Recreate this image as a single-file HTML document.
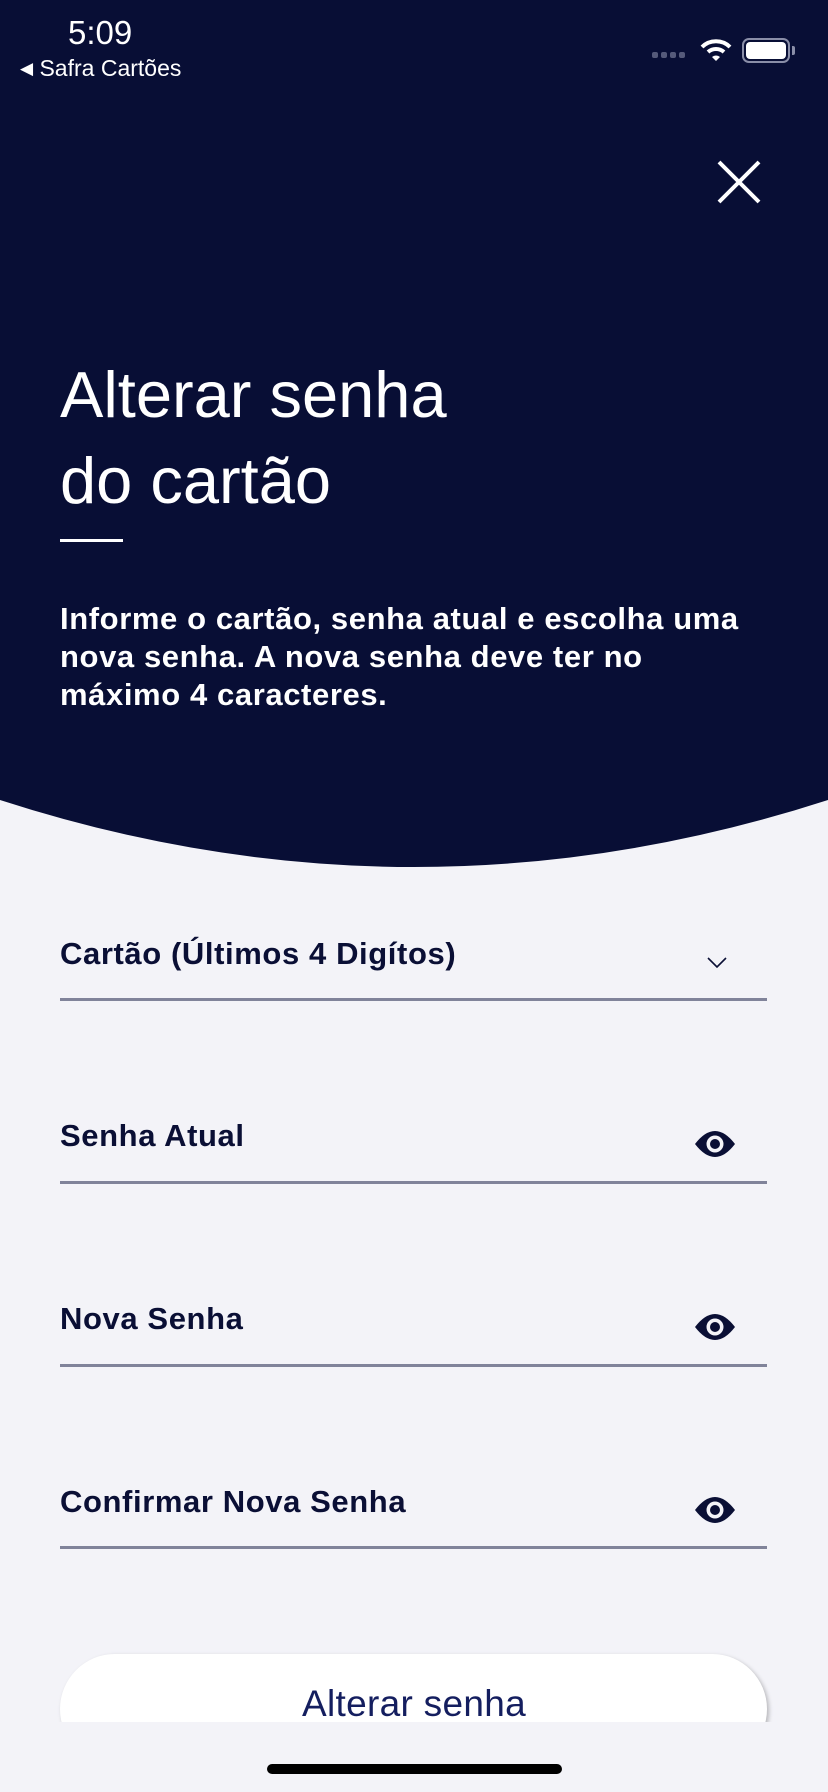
<!DOCTYPE html>
<html><head><meta charset="utf-8"><style>
*{margin:0;padding:0;box-sizing:border-box}
body{width:828px;height:1792px;background:#f3f3f8;font-family:"Liberation Sans",sans-serif;position:relative;overflow:hidden}
.a{position:absolute}
.lbl{position:absolute;left:60px;font-weight:bold;font-size:31px;letter-spacing:0.6px;color:#0a0f35}
.line{position:absolute;left:60px;width:707px;height:3px;background:#80839a}
</style></head><body>
<svg class="a" style="left:0;top:0" width="828" height="870" viewBox="0 0 828 870"><path d="M0 0H828V800Q414 934 0 800Z" fill="#080e35"/></svg>
<div class="a" style="left:68px;top:14px;color:#fff;font-size:33px">5:09</div>
<div class="a" style="left:20px;top:55px;color:#fff;font-size:23px"><span style="font-size:17px;position:relative;top:-2px">◀</span> Safra Cartões</div>
<div class="a" style="left:652px;top:52px;display:flex;gap:3px"><i style="width:6px;height:6px;background:#555a7a;border-radius:2px;display:block"></i><i style="width:6px;height:6px;background:#555a7a;border-radius:2px;display:block"></i><i style="width:6px;height:6px;background:#555a7a;border-radius:2px;display:block"></i><i style="width:6px;height:6px;background:#555a7a;border-radius:2px;display:block"></i></div>
<svg class="a" style="left:700px;top:38px" width="32" height="24" viewBox="0 0 32 24"><path d="M2 9a20 20 0 0 1 28 0" stroke="#fff" stroke-width="4" fill="none"/><path d="M8 14a12 12 0 0 1 16 0" stroke="#fff" stroke-width="4" fill="none"/><path d="M12 19l4 4 4-4a6 6 0 0 0-8 0z" fill="#fff"/></svg>
<div class="a" style="left:742px;top:38px;width:48px;height:25px;border:2px solid #8a8ea8;border-radius:7px;padding:2px"><div style="background:#fff;width:100%;height:100%;border-radius:4px"></div></div>
<div class="a" style="left:792px;top:46px;width:3px;height:9px;background:#8a8ea8;border-radius:0 2px 2px 0"></div>
<svg class="a" style="left:717px;top:160px" width="44" height="44" viewBox="0 0 44 44"><path d="M2 2L42 42M42 2L2 42" stroke="#fff" stroke-width="4"/></svg>
<div class="a" style="left:60px;top:352px;color:#fff;font-size:65px;line-height:86px">Alterar senha<br>do cartão</div>
<div class="a" style="left:60px;top:539px;width:63px;height:3px;background:#fff"></div>
<div class="a" style="left:60px;top:600px;color:#fff;font-size:31px;letter-spacing:0.6px;font-weight:bold;line-height:38px;width:700px">Informe o cartão, senha atual e escolha uma nova senha. A nova senha deve ter no máximo 4 caracteres.</div>

<div class="lbl" style="top:936px">Cartão (Últimos 4 Digítos)</div>
<svg class="a" style="left:707px;top:957px" width="20" height="12" viewBox="0 0 20 12"><path d="M1 1l9 9 9-9" stroke="#0a0f35" stroke-width="1.6" fill="none"/></svg>
<div class="line" style="top:998px"></div>

<div class="lbl" style="top:1118px">Senha Atual</div>
<svg class="a" style="left:694px;top:1128px" width="42" height="32" viewBox="0 0 42 32"><path d="M1 16Q21-10 41 16Q21 42 1 16z" fill="#0a0f35"/><circle cx="21" cy="16" r="8.5" fill="#f3f3f8"/><circle cx="21" cy="16" r="5" fill="#0a0f35"/></svg>
<div class="line" style="top:1181px"></div>

<div class="lbl" style="top:1301px">Nova Senha</div>
<svg class="a" style="left:694px;top:1311px" width="42" height="32" viewBox="0 0 42 32"><path d="M1 16Q21-10 41 16Q21 42 1 16z" fill="#0a0f35"/><circle cx="21" cy="16" r="8.5" fill="#f3f3f8"/><circle cx="21" cy="16" r="5" fill="#0a0f35"/></svg>
<div class="line" style="top:1364px"></div>

<div class="lbl" style="top:1484px">Confirmar Nova Senha</div>
<svg class="a" style="left:694px;top:1494px" width="42" height="32" viewBox="0 0 42 32"><path d="M1 16Q21-10 41 16Q21 42 1 16z" fill="#0a0f35"/><circle cx="21" cy="16" r="8.5" fill="#f3f3f8"/><circle cx="21" cy="16" r="5" fill="#0a0f35"/></svg>
<div class="line" style="top:1546px"></div>

<div class="a" style="left:0;top:1600px;width:828px;height:122px;overflow:hidden">
<div class="a" style="left:60px;top:54px;width:707px;height:110px;background:#fff;border-radius:55px;box-shadow:2px 2px 4px rgba(0,0,0,.25)"></div>
<div class="a" style="left:0;top:83px;width:828px;text-align:center;color:#141e5f;font-size:37px;letter-spacing:0.3px">Alterar senha</div>
</div>
<div class="a" style="left:267px;top:1764px;width:295px;height:10px;background:#000;border-radius:5px"></div>
</body></html>
